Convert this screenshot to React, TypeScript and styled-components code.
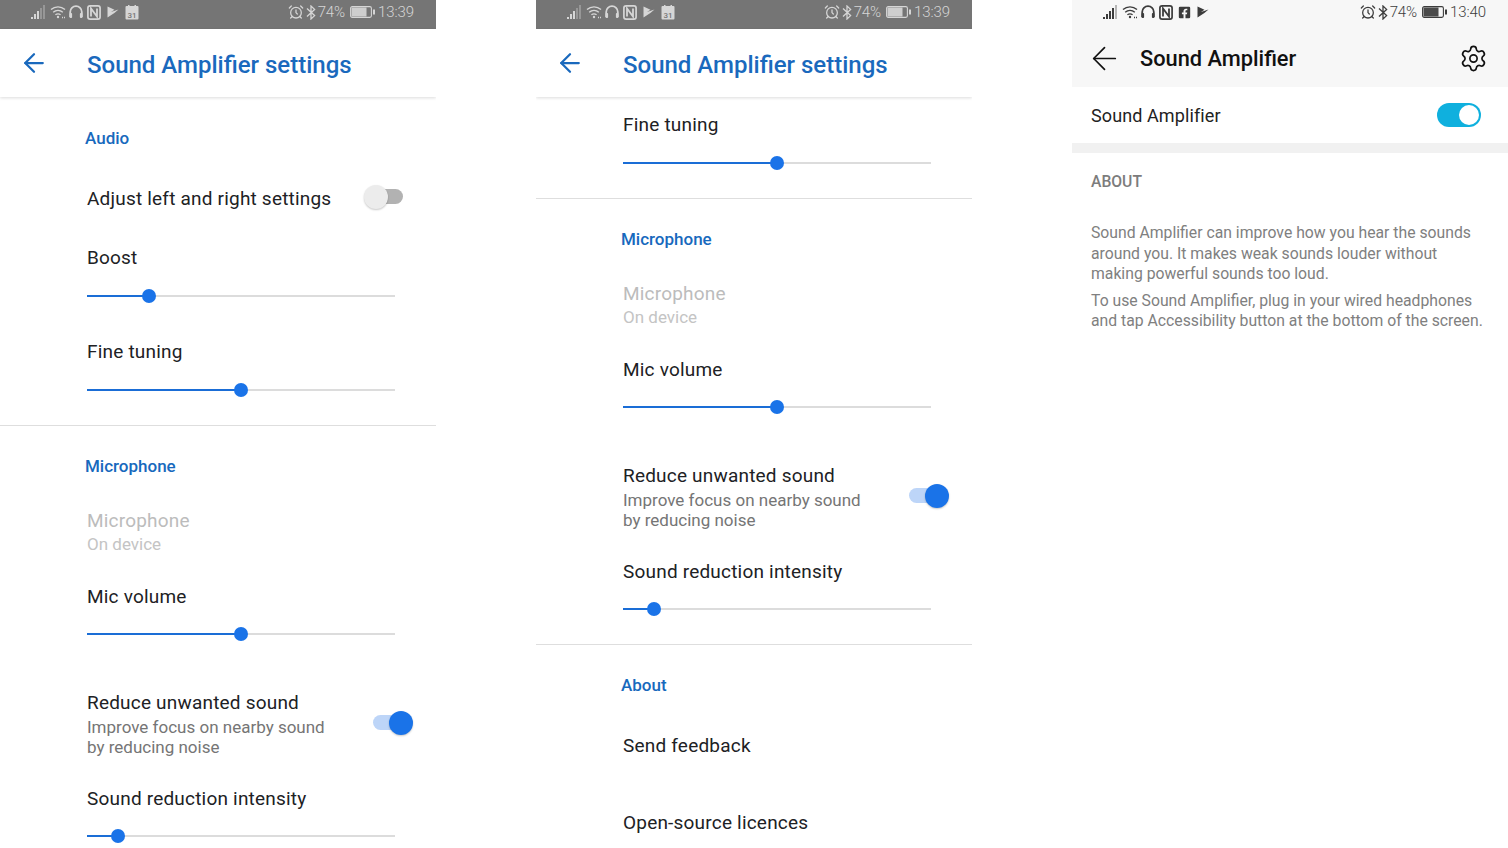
import React from 'react';
import styled, { createGlobalStyle } from 'styled-components';
import { AlarmClock, ArrowLeft, Settings } from 'lucide-react';
import { FaFacebookSquare } from 'react-icons/fa';

const GlobalStyle = createGlobalStyle`
  html, body {
    margin: 0;
    padding: 0;
    background: #fff;
    font-family: Roboto, "Noto Sans", sans-serif;
  }
`;

const Screens = styled.div`
  display: grid;
  grid-template-columns: repeat(3, 436px);
  column-gap: 100px;
  width: 1508px;
  height: 848px;
  overflow: hidden;
`;

const Phone = styled.div`
  display: flex;
  flex-direction: column;
  height: 848px;
  overflow: hidden;
  background: #fff;
`;

const StatusBar = styled.div<{ $light?: boolean }>`
  flex: none;
  display: flex;
  justify-content: space-between;
  align-items: center;
  box-sizing: border-box;
  height: 29px;
  padding: 0 22px 5px 31px;
  background: ${(p) => (p.$light ? '#f7f7f7' : '#757575')};
  color: ${(p) => (p.$light ? '#3c3c3c' : '#d6d6d6')};
`;

const StatusGroup = styled.div`
  display: flex;
  align-items: center;
`;

const Slot = styled.span<{ $left: number }>`
  display: flex;
  align-items: center;
  margin-left: ${(p) => p.$left}px;
`;

const StatusText = styled.span`
  font-size: 15px;
  font-weight: 300;
  line-height: 18px;
  letter-spacing: -0.1px;
`;

const AppBar = styled.header`
  position: relative;
  z-index: 2;
  flex: none;
  display: flex;
  align-items: center;
  height: 68px;
  padding-left: 19px;
  background: #fff;
  color: #1a69bd;
  box-shadow: 0 1px 3px rgba(0, 0, 0, 0.14);
`;

const AppBarTitle = styled.h1`
  margin: 3px 0 0 38px;
  font-size: 24px;
  font-weight: 500;
  line-height: 32px;
  color: #1a69bd;
`;

const SectionLabel = styled.div<{ $top: number }>`
  margin: ${(p) => p.$top}px 0 0 85px;
  font-size: 17px;
  font-weight: 500;
  line-height: 24px;
  color: #1769bd;
`;

const Divider = styled.div`
  margin-top: 27px;
  height: 1px;
  background: #dedede;
`;

const Title = styled.div<{ $disabled?: boolean }>`
  height: 24px;
  font-size: 19px;
  line-height: 26px;
  letter-spacing: 0.2px;
  color: ${(p) => (p.$disabled ? '#bcbcbc' : '#202124')};
`;

const Summary = styled.div<{ $disabled?: boolean }>`
  margin-top: ${(p) => (p.$disabled ? 2 : 3)}px;
  font-size: 17px;
  line-height: 20px;
  color: ${(p) => (p.$disabled ? '#c4c4c4' : '#757575')};
`;

const Row = styled.div<{ $top: number }>`
  margin-top: ${(p) => p.$top}px;
  padding-left: 87px;
`;

const ToggleRow = styled(Row)`
  display: flex;
  justify-content: space-between;
  align-items: center;
`;

const SliderTrack = styled.div<{ $gap: number }>`
  position: relative;
  width: 308px;
  height: 16px;
  margin-top: ${(p) => p.$gap}px;
  &::before {
    content: '';
    position: absolute;
    left: 0;
    right: 0;
    top: 7px;
    height: 2px;
    background: #dcdcdc;
  }
`;

const SliderFill = styled.div`
  position: absolute;
  left: 0;
  top: 7px;
  height: 2px;
  background: #1a6dd6;
`;

const SliderThumb = styled.div`
  position: absolute;
  top: 1px;
  width: 14px;
  height: 14px;
  margin-left: -7px;
  border-radius: 50%;
  background: #1a73e8;
`;

const SwitchBody = styled.div<{ $on: boolean }>`
  position: relative;
  flex: none;
  width: 40px;
  height: 25px;
  margin-right: ${(p) => (p.$on ? 23 : 33)}px;
  &::before {
    content: '';
    position: absolute;
    top: 4px;
    left: ${(p) => (p.$on ? 0 : 10)}px;
    right: ${(p) => (p.$on ? 12 : 0)}px;
    height: 15px;
    border-radius: 8px;
    background: ${(p) => (p.$on ? '#bdd5f8' : '#b2b2b2')};
  }
  &::after {
    content: '';
    position: absolute;
    top: 0;
    ${(p) => (p.$on ? 'right: 0;' : 'left: 1px;')}
    width: 24px;
    height: 24px;
    border-radius: 50%;
    background: ${(p) => (p.$on ? '#1a73e8' : '#ececec')};
    box-shadow: 0 1px 2px rgba(0, 0, 0, 0.22);
  }
`;

const IntroBar = styled.div`
  flex: none;
  display: flex;
  align-items: center;
  height: 58px;
  padding: 0 20px 0 14px;
  background: #f7f7f7;
  color: #111;
`;

const IntroTitle = styled.h1`
  flex: 1;
  margin: 2px 0 0 17px;
  font-size: 21.8px;
  font-weight: 500;
  line-height: 30px;
  color: #111;
`;

const MasterRow = styled.div`
  flex: none;
  display: flex;
  justify-content: space-between;
  align-items: center;
  height: 56px;
  padding: 0 27px 0 19px;
  background: #fff;
  font-size: 18px;
  letter-spacing: 0.1px;
  color: #222;
`;

const MasterSwitch = styled.div`
  position: relative;
  width: 44px;
  height: 24px;
  border-radius: 12px;
  background: #0fb0de;
  &::after {
    content: '';
    position: absolute;
    top: 2px;
    right: 2px;
    width: 20px;
    height: 20px;
    border-radius: 50%;
    background: #fff;
  }
`;

const Band = styled.div`
  flex: none;
  height: 10px;
  background: #f1f1f1;
`;

const AboutPanel = styled.div`
  flex: 1;
  padding: 19px 20px 0 19px;
  background: #fff;
`;

const AboutLabel = styled.div`
  font-size: 15.7px;
  font-weight: 500;
  line-height: 20px;
  color: #7c7c7c;
`;

const AboutText = styled.p<{ $top: number }>`
  margin: ${(p) => p.$top}px 0 0;
  font-size: 15.75px;
  line-height: 20.5px;
  color: #808080;
`;

function SignalIcon({ strong }: { strong?: boolean }) {
  const bars = [2, 5, 8, 11, 14];
  return (
    <svg width="15" height="14" viewBox="0 0 15 14" fill="currentColor">
      {bars.map((h, i) => (
        <rect key={h} x={i * 3} y={14 - h} width="2" height={h} opacity={strong ? (i < 4 ? 1 : 0.35) : i < 3 ? 1 : 0.35} />
      ))}
    </svg>
  );
}

function WifiIcon() {
  return (
    <svg width="16" height="14" viewBox="0 0 16 14" fill="none" stroke="currentColor" strokeWidth="1.4">
      <path d="M1 4.6C5 1 11 1 15 4.6" />
      <path d="M3.2 7.2C6 4.9 10 4.9 12.8 7.2" />
      <path d="M5.4 9.8C6.9 8.7 9.1 8.7 10.6 9.8" />
      <circle cx="8" cy="12" r="1.2" fill="currentColor" stroke="none" />
      <path d="M12 12.5h3" strokeDasharray="1 1" />
    </svg>
  );
}

function HeadsetIcon() {
  return (
    <svg width="14" height="14" viewBox="0 0 14 14" fill="none" stroke="currentColor" strokeWidth="1.8">
      <path d="M1.2 12V7a5.8 5.8 0 0 1 11.6 0v5" />
      <rect x="0.5" y="8" width="2.6" height="5" rx="1" fill="currentColor" stroke="none" />
      <rect x="10.9" y="8" width="2.6" height="5" rx="1" fill="currentColor" stroke="none" />
    </svg>
  );
}

function NfcIcon() {
  return (
    <svg width="14" height="15" viewBox="0 0 14 15" fill="none" stroke="currentColor">
      <rect x="0.9" y="0.9" width="12.2" height="13.2" rx="2.2" strokeWidth="1.7" />
      <path d="M4 11.5V3.5L10 11.5V3.5" strokeWidth="1.8" />
    </svg>
  );
}

function FlagIcon() {
  return (
    <svg width="12" height="12" viewBox="0 0 12 12" fill="currentColor">
      <path d="M0.5 0.5 L7.5 3.8 L4 6 L11.5 3.6 L7.4 6.9 L0.5 11.5 Z" />
    </svg>
  );
}

function CalendarIcon() {
  return (
    <svg width="14" height="15" viewBox="0 0 14 15">
      <rect x="0.5" y="1" width="13" height="13.5" rx="1" fill="currentColor" />
      <rect x="3" y="0" width="1.5" height="2.5" fill="currentColor" />
      <rect x="9.5" y="0" width="1.5" height="2.5" fill="currentColor" />
      <text x="7" y="12.5" fontSize="8" textAnchor="middle" fill="#757575" fontFamily="Roboto, sans-serif" fontWeight="500">
        31
      </text>
    </svg>
  );
}

function BluetoothIcon() {
  return (
    <svg width="10" height="15" viewBox="0 0 10 15" fill="none" stroke="currentColor" strokeWidth="1.3">
      <path d="M1 3.6 L8.6 10.6 L5 14 V1 L8.6 4.4 L1 11.4" />
    </svg>
  );
}

function BatteryIcon() {
  return (
    <svg width="25" height="12" viewBox="0 0 25 12">
      <rect x="0.6" y="0.6" width="20.8" height="10.8" rx="1.6" fill="none" stroke="currentColor" strokeWidth="1.1" />
      <rect x="1.5" y="1.5" width="15" height="9" fill="currentColor" opacity="0.92" />
      <rect x="23" y="3.5" width="2" height="5" fill="currentColor" />
    </svg>
  );
}

function StatusIcons({ light, clock }: { light?: boolean; clock: string }) {
  return (
    <StatusBar $light={light}>
      <StatusGroup>
        <SignalIcon strong={light} />
        <Slot $left={4}><WifiIcon /></Slot>
        <Slot $left={3}><HeadsetIcon /></Slot>
        <Slot $left={4}><NfcIcon /></Slot>
        {light ? (
          <>
            <Slot $left={5}><FaFacebookSquare size={13} /></Slot>
            <Slot $left={6}><FlagIcon /></Slot>
          </>
        ) : (
          <>
            <Slot $left={6}><FlagIcon /></Slot>
            <Slot $left={6}><CalendarIcon /></Slot>
          </>
        )}
      </StatusGroup>
      <StatusGroup>
        <AlarmClock size={16} strokeWidth={1.9} />
        <Slot $left={2}><BluetoothIcon /></Slot>
        <Slot $left={2}><StatusText>74%</StatusText></Slot>
        <Slot $left={5}><BatteryIcon /></Slot>
        <Slot $left={3}><StatusText>{clock}</StatusText></Slot>
      </StatusGroup>
    </StatusBar>
  );
}

function SliderRow({ label, value, top = 35, gap = 19 }: { label: string; value: number; top?: number; gap?: number }) {
  return (
    <Row $top={top}>
      <Title>{label}</Title>
      <SliderTrack $gap={gap}>
        <SliderFill style={{ width: `${value}%` }} />
        <SliderThumb style={{ left: `${value}%` }} />
      </SliderTrack>
    </Row>
  );
}

function MicrophoneSection() {
  return (
    <>
      <Divider />
      <SectionLabel $top={28}>Microphone</SectionLabel>
      <Row $top={30}>
        <Title $disabled>Microphone</Title>
        <Summary $disabled>On device</Summary>
      </Row>
      <SliderRow label="Mic volume" value={50} top={30} gap={18} />
      <ToggleRow $top={48}>
        <div>
          <Title>Reduce unwanted sound</Title>
          <Summary>
            Improve focus on nearby sound
            <br />
            by reducing noise
          </Summary>
        </div>
        <SwitchBody $on />
      </ToggleRow>
      <SliderRow label="Sound reduction intensity" value={10} top={29} gap={18} />
    </>
  );
}

function SettingsHeader() {
  return (
    <>
      <StatusIcons clock="13:39" />
      <AppBar>
        <ArrowLeft size={30} strokeWidth={1.8} />
        <AppBarTitle>Sound Amplifier settings</AppBarTitle>
      </AppBar>
    </>
  );
}

function SettingsTopScreen() {
  return (
    <Phone>
      <SettingsHeader />
      <SectionLabel $top={29}>Audio</SectionLabel>
      <ToggleRow $top={35}>
        <Title>Adjust left and right settings</Title>
        <SwitchBody $on={false} />
      </ToggleRow>
      <SliderRow label="Boost" value={20} />
      <SliderRow label="Fine tuning" value={50} />
      <MicrophoneSection />
    </Phone>
  );
}

function SettingsScrolledScreen() {
  return (
    <Phone>
      <SettingsHeader />
      <SliderRow label="Fine tuning" value={50} top={15} />
      <MicrophoneSection />
      <Divider />
      <SectionLabel $top={28}>About</SectionLabel>
      <Row $top={36}>
        <Title>Send feedback</Title>
      </Row>
      <Row $top={53}>
        <Title>Open-source licences</Title>
      </Row>
    </Phone>
  );
}

function IntroScreen() {
  return (
    <Phone>
      <StatusIcons light clock="13:40" />
      <IntroBar>
        <ArrowLeft size={37} strokeWidth={1.1} />
        <IntroTitle>Sound Amplifier</IntroTitle>
        <Settings size={29} strokeWidth={1.4} />
      </IntroBar>
      <MasterRow>
        Sound Amplifier
        <MasterSwitch />
      </MasterRow>
      <Band />
      <AboutPanel>
        <AboutLabel>ABOUT</AboutLabel>
        <AboutText $top={31}>
          Sound Amplifier can improve how you hear the sounds around you. It makes weak sounds louder without making
          powerful sounds too loud.
        </AboutText>
        <AboutText $top={6}>
          To use Sound Amplifier, plug in your wired headphones and tap Accessibility button at the bottom of the
          screen.
        </AboutText>
      </AboutPanel>
    </Phone>
  );
}

export default function App() {
  return (
    <>
      <GlobalStyle />
      <Screens>
        <SettingsTopScreen />
        <SettingsScrolledScreen />
        <IntroScreen />
      </Screens>
    </>
  );
}
